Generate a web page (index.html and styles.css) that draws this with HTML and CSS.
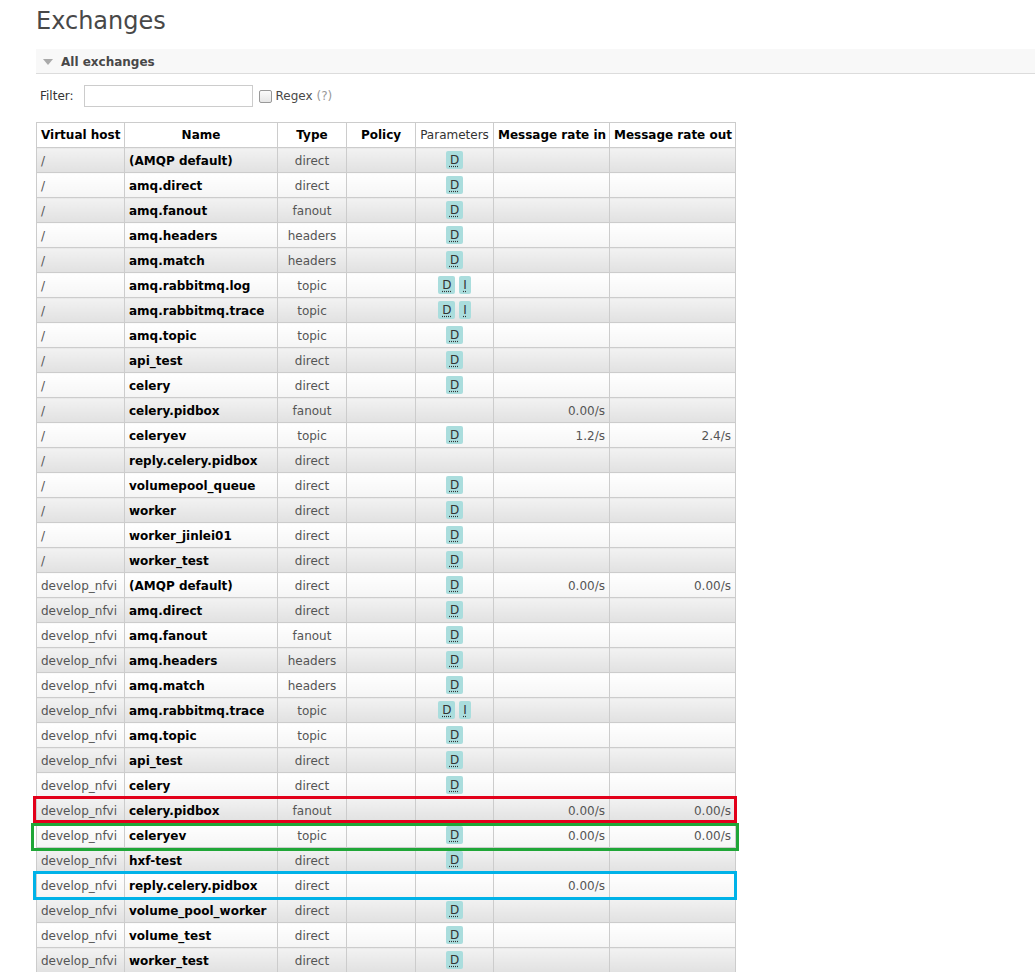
FILE: index.html
```html
<!DOCTYPE html>
<html>
<head>
<meta charset="utf-8">
<title>Exchanges</title>
<link rel="stylesheet" href="styles.css">
</head>
<body>
<div class="main">
  <h1 class="title">Exchanges</h1>
  <div class="section">
    <h2 class="section-head"><span class="tri"></span>All exchanges</h2>
    <div class="filter">
      <label class="filter-label">Filter:</label>
      <input class="filter-input" type="text">
      <span class="cb"></span>
      <span class="regex">Regex <span class="help">(?)</span></span>
    </div>
    <div class="table-wrap">
      <table class="list">
        <colgroup>
          <col class="c-vhost"><col class="c-name"><col class="c-type"><col class="c-policy"><col class="c-params"><col class="c-in"><col class="c-out">
        </colgroup>
        <thead>
          <tr><th class="l">Virtual host</th><th>Name</th><th>Type</th><th>Policy</th><th class="normal">Parameters</th><th>Message rate in</th><th>Message rate out</th></tr>
        </thead>
        <tbody>
          <tr class="alt1"><td class="vh">/</td><td class="nm">(AMQP default)</td><td class="ty">direct</td><td></td><td class="pa"><abbr>D</abbr></td><td class="rt"></td><td class="rt"></td></tr>
          <tr class="alt2"><td class="vh">/</td><td class="nm">amq.direct</td><td class="ty">direct</td><td></td><td class="pa"><abbr>D</abbr></td><td class="rt"></td><td class="rt"></td></tr>
          <tr class="alt1"><td class="vh">/</td><td class="nm">amq.fanout</td><td class="ty">fanout</td><td></td><td class="pa"><abbr>D</abbr></td><td class="rt"></td><td class="rt"></td></tr>
          <tr class="alt2"><td class="vh">/</td><td class="nm">amq.headers</td><td class="ty">headers</td><td></td><td class="pa"><abbr>D</abbr></td><td class="rt"></td><td class="rt"></td></tr>
          <tr class="alt1"><td class="vh">/</td><td class="nm">amq.match</td><td class="ty">headers</td><td></td><td class="pa"><abbr>D</abbr></td><td class="rt"></td><td class="rt"></td></tr>
          <tr class="alt2"><td class="vh">/</td><td class="nm">amq.rabbitmq.log</td><td class="ty">topic</td><td></td><td class="pa"><abbr>D</abbr> <abbr>I</abbr></td><td class="rt"></td><td class="rt"></td></tr>
          <tr class="alt1"><td class="vh">/</td><td class="nm">amq.rabbitmq.trace</td><td class="ty">topic</td><td></td><td class="pa"><abbr>D</abbr> <abbr>I</abbr></td><td class="rt"></td><td class="rt"></td></tr>
          <tr class="alt2"><td class="vh">/</td><td class="nm">amq.topic</td><td class="ty">topic</td><td></td><td class="pa"><abbr>D</abbr></td><td class="rt"></td><td class="rt"></td></tr>
          <tr class="alt1"><td class="vh">/</td><td class="nm">api_test</td><td class="ty">direct</td><td></td><td class="pa"><abbr>D</abbr></td><td class="rt"></td><td class="rt"></td></tr>
          <tr class="alt2"><td class="vh">/</td><td class="nm">celery</td><td class="ty">direct</td><td></td><td class="pa"><abbr>D</abbr></td><td class="rt"></td><td class="rt"></td></tr>
          <tr class="alt1"><td class="vh">/</td><td class="nm">celery.pidbox</td><td class="ty">fanout</td><td></td><td class="pa"></td><td class="rt">0.00/s</td><td class="rt"></td></tr>
          <tr class="alt2"><td class="vh">/</td><td class="nm">celeryev</td><td class="ty">topic</td><td></td><td class="pa"><abbr>D</abbr></td><td class="rt">1.2/s</td><td class="rt">2.4/s</td></tr>
          <tr class="alt1"><td class="vh">/</td><td class="nm">reply.celery.pidbox</td><td class="ty">direct</td><td></td><td class="pa"></td><td class="rt"></td><td class="rt"></td></tr>
          <tr class="alt2"><td class="vh">/</td><td class="nm">volumepool_queue</td><td class="ty">direct</td><td></td><td class="pa"><abbr>D</abbr></td><td class="rt"></td><td class="rt"></td></tr>
          <tr class="alt1"><td class="vh">/</td><td class="nm">worker</td><td class="ty">direct</td><td></td><td class="pa"><abbr>D</abbr></td><td class="rt"></td><td class="rt"></td></tr>
          <tr class="alt2"><td class="vh">/</td><td class="nm">worker_jinlei01</td><td class="ty">direct</td><td></td><td class="pa"><abbr>D</abbr></td><td class="rt"></td><td class="rt"></td></tr>
          <tr class="alt1"><td class="vh">/</td><td class="nm">worker_test</td><td class="ty">direct</td><td></td><td class="pa"><abbr>D</abbr></td><td class="rt"></td><td class="rt"></td></tr>
          <tr class="alt2"><td class="vh">develop_nfvi</td><td class="nm">(AMQP default)</td><td class="ty">direct</td><td></td><td class="pa"><abbr>D</abbr></td><td class="rt">0.00/s</td><td class="rt">0.00/s</td></tr>
          <tr class="alt1"><td class="vh">develop_nfvi</td><td class="nm">amq.direct</td><td class="ty">direct</td><td></td><td class="pa"><abbr>D</abbr></td><td class="rt"></td><td class="rt"></td></tr>
          <tr class="alt2"><td class="vh">develop_nfvi</td><td class="nm">amq.fanout</td><td class="ty">fanout</td><td></td><td class="pa"><abbr>D</abbr></td><td class="rt"></td><td class="rt"></td></tr>
          <tr class="alt1"><td class="vh">develop_nfvi</td><td class="nm">amq.headers</td><td class="ty">headers</td><td></td><td class="pa"><abbr>D</abbr></td><td class="rt"></td><td class="rt"></td></tr>
          <tr class="alt2"><td class="vh">develop_nfvi</td><td class="nm">amq.match</td><td class="ty">headers</td><td></td><td class="pa"><abbr>D</abbr></td><td class="rt"></td><td class="rt"></td></tr>
          <tr class="alt1"><td class="vh">develop_nfvi</td><td class="nm">amq.rabbitmq.trace</td><td class="ty">topic</td><td></td><td class="pa"><abbr>D</abbr> <abbr>I</abbr></td><td class="rt"></td><td class="rt"></td></tr>
          <tr class="alt2"><td class="vh">develop_nfvi</td><td class="nm">amq.topic</td><td class="ty">topic</td><td></td><td class="pa"><abbr>D</abbr></td><td class="rt"></td><td class="rt"></td></tr>
          <tr class="alt1"><td class="vh">develop_nfvi</td><td class="nm">api_test</td><td class="ty">direct</td><td></td><td class="pa"><abbr>D</abbr></td><td class="rt"></td><td class="rt"></td></tr>
          <tr class="alt2"><td class="vh">develop_nfvi</td><td class="nm">celery</td><td class="ty">direct</td><td></td><td class="pa"><abbr>D</abbr></td><td class="rt"></td><td class="rt"></td></tr>
          <tr class="alt1"><td class="vh">develop_nfvi</td><td class="nm">celery.pidbox</td><td class="ty">fanout</td><td></td><td class="pa"></td><td class="rt">0.00/s</td><td class="rt">0.00/s</td></tr>
          <tr class="alt2"><td class="vh">develop_nfvi</td><td class="nm">celeryev</td><td class="ty">topic</td><td></td><td class="pa"><abbr>D</abbr></td><td class="rt">0.00/s</td><td class="rt">0.00/s</td></tr>
          <tr class="alt1"><td class="vh">develop_nfvi</td><td class="nm">hxf-test</td><td class="ty">direct</td><td></td><td class="pa"><abbr>D</abbr></td><td class="rt"></td><td class="rt"></td></tr>
          <tr class="alt2"><td class="vh">develop_nfvi</td><td class="nm">reply.celery.pidbox</td><td class="ty">direct</td><td></td><td class="pa"></td><td class="rt">0.00/s</td><td class="rt"></td></tr>
          <tr class="alt1"><td class="vh">develop_nfvi</td><td class="nm">volume_pool_worker</td><td class="ty">direct</td><td></td><td class="pa"><abbr>D</abbr></td><td class="rt"></td><td class="rt"></td></tr>
          <tr class="alt2"><td class="vh">develop_nfvi</td><td class="nm">volume_test</td><td class="ty">direct</td><td></td><td class="pa"><abbr>D</abbr></td><td class="rt"></td><td class="rt"></td></tr>
          <tr class="alt1"><td class="vh">develop_nfvi</td><td class="nm">worker_test</td><td class="ty">direct</td><td></td><td class="pa"><abbr>D</abbr></td><td class="rt"></td><td class="rt"></td></tr>
        </tbody>
      </table>
      <div class="mark mark-red"></div>
      <div class="mark mark-green"></div>
      <div class="mark mark-cyan"></div>
    </div>
  </div>
</div>
</body>
</html>
```

FILE: styles.css
```css
html, body {
  margin: 0;
  padding: 0;
  background: #fff;
}
body {
  font-family: "DejaVu Sans", Verdana, sans-serif;
  font-size: 12px;
  color: #484848;
  overflow: hidden;
}
.main {
  padding-left: 36px;
}
.title {
  margin: 7px 0 0;
  font-size: 24px;
  line-height: 28px;
  font-weight: normal;
  color: #484848;
}
.section {
  margin-top: 14px;
}
.section-head {
  margin: 0;
  box-sizing: border-box;
  height: 25px;
  background: #f8f8f8;
  border-bottom: 1px solid #dcdcdc;
  font-size: 12px;
  font-weight: bold;
  color: #484848;
  display: flex;
  align-items: center;
  padding-left: 7px;
  padding-top: 1px;
  line-height: 22px;
}
.tri {
  width: 0;
  height: 0;
  border-left: 5px solid transparent;
  border-right: 5px solid transparent;
  border-top: 6px solid #aaa;
  margin-right: 8px;
  margin-top: 1px;
}
.filter {
  display: flex;
  align-items: center;
  margin-top: 11px;
  padding-left: 4px;
  height: 22px;
}
.filter-label {
  color: #333;
  margin-right: 10px;
}
.filter-input {
  box-sizing: border-box;
  width: 169px;
  height: 22px;
  margin: 0;
  border: 1px solid #ccc;
  padding: 0 3px;
}
.cb {
  box-sizing: border-box;
  width: 13px;
  height: 13px;
  border: 1px solid #999;
  border-radius: 2px;
  background: linear-gradient(#fbfbfb, #e6e6e6);
  margin-left: 6px;
  margin-right: 4px;
}
.regex {
  color: #484848;
}
.help {
  color: #999;
}
.table-wrap {
  position: relative;
  margin-top: 15px;
  width: 699px;
}
table.list {
  border-collapse: collapse;
  table-layout: fixed;
  width: 699px;
}
.c-vhost { width: 88px; }
.c-name { width: 153px; }
.c-type { width: 69px; }
.c-policy { width: 69px; }
.c-params { width: 78px; }
.c-in { width: 116px; }
.c-out { width: 126px; }
table.list th, table.list td {
  border: 1px solid #ccc;
  padding: 4px 4px 2px;
  line-height: 18px;
  height: 18px;
  white-space: nowrap;
  overflow: hidden;
}
table.list th {
  padding: 3px 4px;
}
table.list td.pa {
  padding: 3px 4px;
}
table.list th {
  background: #fff;
  color: #000;
  font-weight: bold;
  text-align: center;
}
table.list th.l {
  text-align: left;
}
table.list th.normal {
  font-weight: normal;
  color: #333;
}
tr.alt1 td {
  background: linear-gradient(#f2f2f2, #e1e1e1);
}
tr.alt2 td {
  background: linear-gradient(#ffffff, #f5f5f5);
}
td.vh {
  color: #555;
}
td.nm {
  color: #000;
  font-weight: bold;
}
td.ty {
  color: #555;
  text-align: center;
}
td.pa {
  text-align: center;
}
td.rt {
  color: #555;
  text-align: right;
}
abbr {
  display: inline-block;
  background: #aadddd;
  color: #333;
  padding: 0 4px;
  border-radius: 2px;
  line-height: 18px;
  text-decoration: underline dotted;
  text-underline-offset: 2px;
}
.mark {
  position: absolute;
  box-sizing: border-box;
  border: 3px solid;
}
.mark-red {
  left: -3px;
  top: 674px;
  width: 704px;
  height: 27px;
  border-color: #e2001a;
}
.mark-green {
  left: -5px;
  top: 701px;
  width: 708px;
  height: 28px;
  border-color: #1fa637;
}
.mark-cyan {
  left: -3px;
  top: 749px;
  width: 704px;
  height: 29px;
  border-color: #00b2e8;
}
```
